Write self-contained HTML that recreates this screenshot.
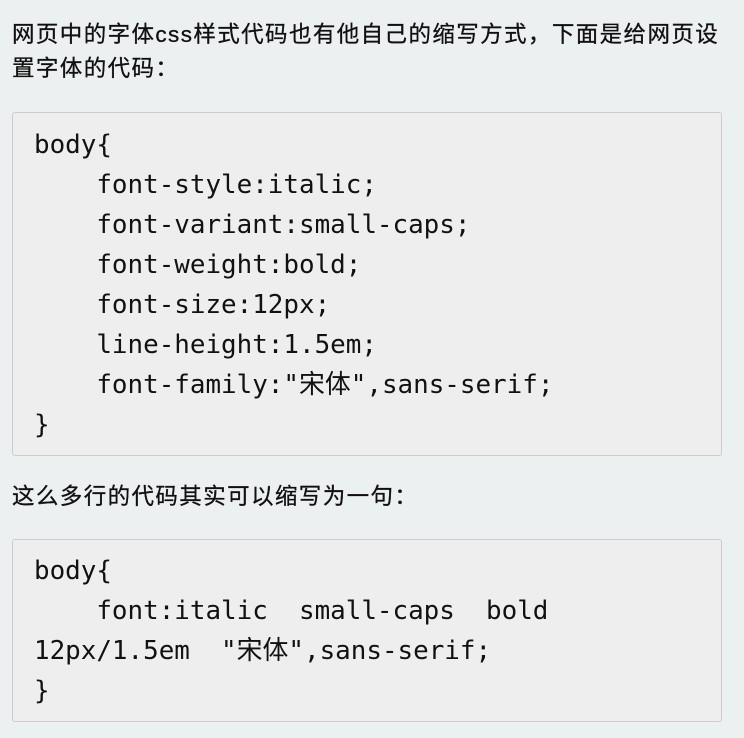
<!DOCTYPE html>
<html><head><meta charset="utf-8"><style>
html,body{margin:0;padding:0;background:#edf0f1;}
body{width:744px;height:738px;overflow:hidden;position:relative;font-family:"Liberation Sans","Noto Sans CJK SC",sans-serif;color:#111;}
.p{position:absolute;left:12px;font-size:22.5px;line-height:34px;white-space:nowrap;letter-spacing:1.4px;-webkit-text-stroke:0.3px #111;}
.code{position:absolute;left:12px;width:710px;background:#eeeeee;border:1px solid #cccccc;border-radius:3px;box-sizing:border-box;}
pre{margin:0;padding-left:21px;font-family:"DejaVu Sans Mono","Noto Sans CJK SC",monospace;font-size:25.9px;line-height:40px;color:#111;}
</style></head><body>
<div class="p" style="top:18px">网页中的字体css样式代码也有他自己的缩写方式，下面是给网页设<br>置字体的代码：</div>
<div class="code" style="top:112px;height:344px;"><pre style="padding-top:12px">body{
    font-style:italic;
    font-variant:small-caps;
    font-weight:bold;
    font-size:12px;
    line-height:1.5em;
    font-family:"宋体",sans-serif;
}</pre></div>
<div class="p" style="top:480px">这么多行的代码其实可以缩写为一句：</div>
<div class="code" style="top:539px;height:183px;"><pre style="padding-top:11px">body{
    font:italic  small-caps  bold
12px/1.5em  "宋体",sans-serif;
}</pre></div>
</body></html>
